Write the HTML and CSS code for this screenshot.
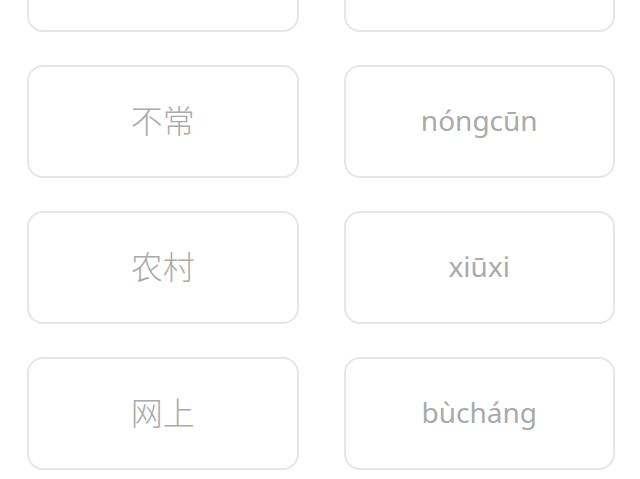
FILE: index.html
```html
<!DOCTYPE html>
<html>
<head>
<meta charset="utf-8">
<link rel="stylesheet" href="styles.css">
</head>
<body>
<div class="board">
  <div class="card zh">休息</div>
  <div class="card py">wǎngshàng</div>
  <div class="card zh">不常</div>
  <div class="card py">nóngcūn</div>
  <div class="card zh">农村</div>
  <div class="card py">xiūxi</div>
  <div class="card zh">网上</div>
  <div class="card py">bùcháng</div>
</div>
</body>
</html>
```
FILE: styles.css
```css
html, body {
  margin: 0;
  padding: 0;
  background: #ffffff;
  overflow: hidden;
}
.board {
  display: grid;
  grid-template-columns: 1fr 1fr;
  column-gap: 45px;
  row-gap: 33px;
  padding: 0 25px 0 27px;
  margin-top: -81px;
}
.card {
  height: 113px;
  box-sizing: border-box;
  border: 2px solid #e6e6e6;
  border-radius: 16px;
  display: flex;
  align-items: center;
  justify-content: center;
  color: #aaaaaa;
}
.zh {
  font-family: "Noto Sans CJK SC", "Noto Sans", sans-serif;
  font-size: 32px;
  font-weight: 300;
  padding-bottom: 6px;
}
.py {
  font-family: "Noto Sans", "Open Sans", sans-serif;
  font-size: 28px;
  padding-bottom: 3px;
}
```
